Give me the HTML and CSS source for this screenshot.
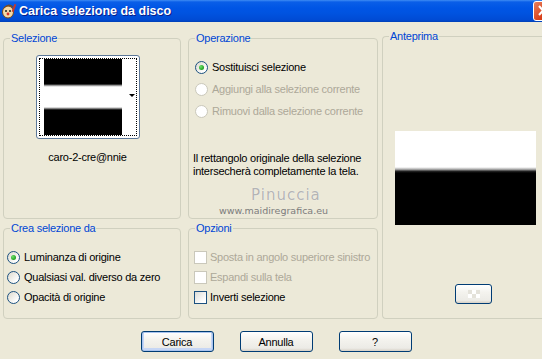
FILE: index.html
```html
<!DOCTYPE html>
<html>
<head>
  <meta charset="utf-8">
  <title>Carica selezione da disco</title>
  <link rel="stylesheet" href="styles.css">
</head>
<body>
  <div class="window">
    <div class="titlebar">
      <svg class="app-icon" width="16" height="16" viewBox="0 0 16 16">
        <ellipse cx="7" cy="9" rx="5.5" ry="6" fill="#f3d9a8" stroke="#7a4a1c" stroke-width="1"/>
        <path d="M3 5 Q7 0 12 4" fill="none" stroke="#7a4a1c" stroke-width="1.2"/>
        <circle cx="5" cy="8" r="1" fill="#222"/>
        <circle cx="9" cy="8" r="1" fill="#222"/>
        <circle cx="7" cy="11" r="1.4" fill="#d8302a"/>
        <rect x="12" y="1" width="2" height="8" fill="#c8382a" transform="rotate(20 13 5)"/>
      </svg>
      <span class="title">Carica selezione da disco</span>
      <span class="close-btn">
        <svg width="19" height="18" viewBox="0 0 19 18">
          <path d="M5 4 L13 13 M13 4 L5 13" stroke="#fff" stroke-width="2" fill="none"/>
        </svg>
      </span>
    </div>

    <div class="main">
      <fieldset class="grp sel">
        <legend>Selezione</legend>
        <div class="thumb">
          <div class="focus">
            <div class="thumb-img"></div>
            <div class="drop"><span class="arrow"></span></div>
          </div>
        </div>
        <div class="caption">caro-2-cre@nnie</div>
      </fieldset>

      <fieldset class="grp op">
        <legend>Operazione</legend>
        <div class="opts op-opts">
          <div class="opt"><span class="radio on"></span>Sostituisci selezione</div>
          <div class="opt off"><span class="radio"></span>Aggiungi alla selezione corrente</div>
          <div class="opt off"><span class="radio"></span>Rimuovi dalla selezione corrente</div>
        </div>
        <p class="note">Il rettangolo originale della selezione intersecherà completamente la tela.</p>
        <div class="wm-name">Pinuccia</div>
        <div class="wm-site">www.maidiregrafica.eu</div>
      </fieldset>

      <fieldset class="grp ant">
        <legend>Anteprima</legend>
        <div class="preview"></div>
        <div class="ant-foot">
          <button class="btn small"><span class="checker"></span></button>
        </div>
      </fieldset>

      <fieldset class="grp crea">
        <legend>Crea selezione da</legend>
        <div class="opts crea-opts">
          <div class="opt"><span class="radio on"></span>Luminanza di origine</div>
          <div class="opt"><span class="radio"></span>Qualsiasi val. diverso da zero</div>
          <div class="opt"><span class="radio"></span>Opacità di origine</div>
        </div>
      </fieldset>

      <fieldset class="grp opz">
        <legend>Opzioni</legend>
        <div class="opts opz-opts">
          <div class="opt off"><span class="check"></span>Sposta in angolo superiore sinistro</div>
          <div class="opt off"><span class="check"></span>Espandi sulla tela</div>
          <div class="opt"><span class="check"></span>Inverti selezione</div>
        </div>
      </fieldset>
    </div>

    <div class="actions">
      <button class="btn default">Carica</button>
      <button class="btn">Annulla</button>
      <button class="btn">?</button>
    </div>
  </div>
</body>
</html>
```

FILE: styles.css
```css
body {
  margin: 0;
  font-family: "Liberation Sans", Arial, sans-serif;
  font-size: 11px;
  letter-spacing: -0.25px;
  color: #000;
  background-color: #ece9d8;
  overflow: hidden;
}

.window {
  width: 542px;
  height: 359px;
  overflow: hidden;
}

/* title bar */
.titlebar {
  height: 22px;
  display: flex;
  align-items: center;
  background: linear-gradient(#3f8cf3 0, #0a5ee8 2px, #0055e5 8px, #0053e0 60%, #004bd4 90%, #003fb6 100%);
}

.app-icon {
  margin-left: 1px;
  margin-right: 2px;
}

.title {
  flex: 1;
  color: #fff;
  font-weight: bold;
  font-size: 12.5px;
  letter-spacing: 0;
  text-shadow: 1px 1px 0 #0a1e8a;
}

.close-btn {
  width: 21px;
  height: 20px;
  margin-right: -12px;
  border: 1px solid #fff;
  border-radius: 3px;
  box-sizing: border-box;
  background: linear-gradient(135deg, #e8805e, #d9421c 60%, #c8381a);
  display: flex;
}

/* groups */
.main {
  display: grid;
  grid-template-columns: 178px 7px 190px 4px 170px;
  grid-template-rows: 187px 97px;
  row-gap: 3px;
  grid-template-areas:
    "sel . op . ant"
    "crea . opz . ant";
  padding: 10px 0 0 3px;
}

.grp {
  margin: 0;
  padding: 0;
  border: 1px solid #d0d0bf;
  border-radius: 4px;
  min-width: 0;
}

.grp legend {
  color: #0046d5;
  padding: 0 1px;
  margin-left: 6px;
  line-height: 13px;
}

.sel { grid-area: sel; }
.op { grid-area: op; position: relative; }
.ant { grid-area: ant; margin-top: -2px; border-right: none; border-radius: 4px 0 0 4px; }
.crea { grid-area: crea; }
.opz { grid-area: opz; }

/* selection thumbnail */
.sel {
  display: flex;
  flex-direction: column;
  align-items: center;
  padding-right: 9px;
}

.thumb {
  width: 104px;
  height: 84px;
  box-sizing: border-box;
  margin-top: 10px;
  padding: 2px;
  border: 1px solid #5d7899;
  border-radius: 3px;
  background-color: #fff;
}

.focus {
  height: 78px;
  box-sizing: border-box;
  border: 1px dotted #000;
  padding-left: 4px;
  display: flex;
}

.thumb-img {
  width: 78px;
  height: 76px;
  background: linear-gradient(#000 0, #000 25px, #6a6a6a 26px, #c8c8c8 27px, #fff 28px, #fff 48px, #b0b0b0 49px, #555 50px, #000 51px);
}

.drop {
  flex: 1;
  display: flex;
  align-items: center;
  justify-content: flex-end;
  padding-right: 1px;
  padding-bottom: 4px;
}

.arrow {
  width: 0;
  height: 0;
  border-left: 3px solid transparent;
  border-right: 3px solid transparent;
  border-top: 3px solid #000;
}

.caption {
  margin-top: 12px;
  line-height: 13px;
}

/* options */
.opts {
  display: flex;
  flex-direction: column;
}

.opt {
  display: flex;
  align-items: center;
  gap: 4px;
}

.op-opts { padding: 11px 0 0 6px; }
.op-opts .opt { height: 22px; }

.crea-opts { padding: 12px 0 0 3px; }
.crea-opts .opt { height: 20px; }

.opz-opts { padding: 12px 0 0 5px; }
.opz-opts .opt { height: 20px; gap: 3px; }

.opt.off {
  color: #aca899;
}

.radio {
  width: 13px;
  height: 13px;
  box-sizing: border-box;
  border: 1px solid #1c5180;
  border-radius: 50%;
  background: linear-gradient(135deg, #dcd9cd, #fff 80%);
  display: flex;
  align-items: center;
  justify-content: center;
}

.radio.on::after {
  content: "";
  width: 5px;
  height: 5px;
  border-radius: 50%;
  background: radial-gradient(circle at 35% 35%, #6ee06a, #21a121 70%);
}

.off .radio {
  border-color: #cac8bb;
  background: #fff;
}

.check {
  width: 13px;
  height: 13px;
  box-sizing: border-box;
  border: 1px solid #1c5180;
  background: linear-gradient(135deg, #dcdcd7, #fff 80%);
}

.off .check {
  border-color: #cac8bb;
  background: #fff;
}

.note {
  margin: 30px 0 0 4px;
  line-height: 13px;
  width: 180px;
}

/* watermark over the operation box */
.wm-name {
  position: absolute;
  left: 62px;
  top: 141px;
  font-family: "DejaVu Sans", sans-serif;
  font-size: 15px;
  letter-spacing: 1px;
  color: #b4b4b4;
  text-shadow: 0 0 1px #fff;
}

.wm-site {
  position: absolute;
  left: 30px;
  top: 160px;
  font-family: "DejaVu Sans", sans-serif;
  font-size: 9.5px;
  letter-spacing: 0;
  color: #7c7c7c;
}

/* preview */
.ant {
  display: flex;
  flex-direction: column;
}

.preview {
  width: 141px;
  height: 94px;
  margin: 88px 0 0 12px;
  background: linear-gradient(#fff 0, #fff 36px, #e0e0e0 37px, #8a8a8a 39px, #2a2a2a 40px, #000 42px);
}

.ant-foot {
  margin-top: 59px;
  padding-left: 72px;
}

/* buttons */
.btn {
  font-family: inherit;
  font-size: 11px;
  letter-spacing: -0.25px;
  width: 73px;
  height: 21px;
  padding: 0;
  border: 1px solid #003c74;
  border-radius: 3px;
  background: linear-gradient(#fff, #f4f3ee 40%, #ecebe6 85%, #d6d0c5);
  color: #000;
}

.btn.default {
  box-shadow: inset 0 0 0 1px #a9c4ef, inset 0 -1px 0 2px #c6d6f5;
}

.btn.small {
  width: 37px;
  height: 20px;
  display: flex;
  align-items: center;
  justify-content: center;
}

.checker {
  width: 12px;
  height: 8px;
  background: conic-gradient(#fff 25%, #e4e2da 0 50%, #fff 0 75%, #e4e2da 0) 0 0 / 8px 8px;
}

.actions {
  display: flex;
  justify-content: center;
  gap: 26px;
  margin-top: 12px;
  padding-left: 10px;
}
```
